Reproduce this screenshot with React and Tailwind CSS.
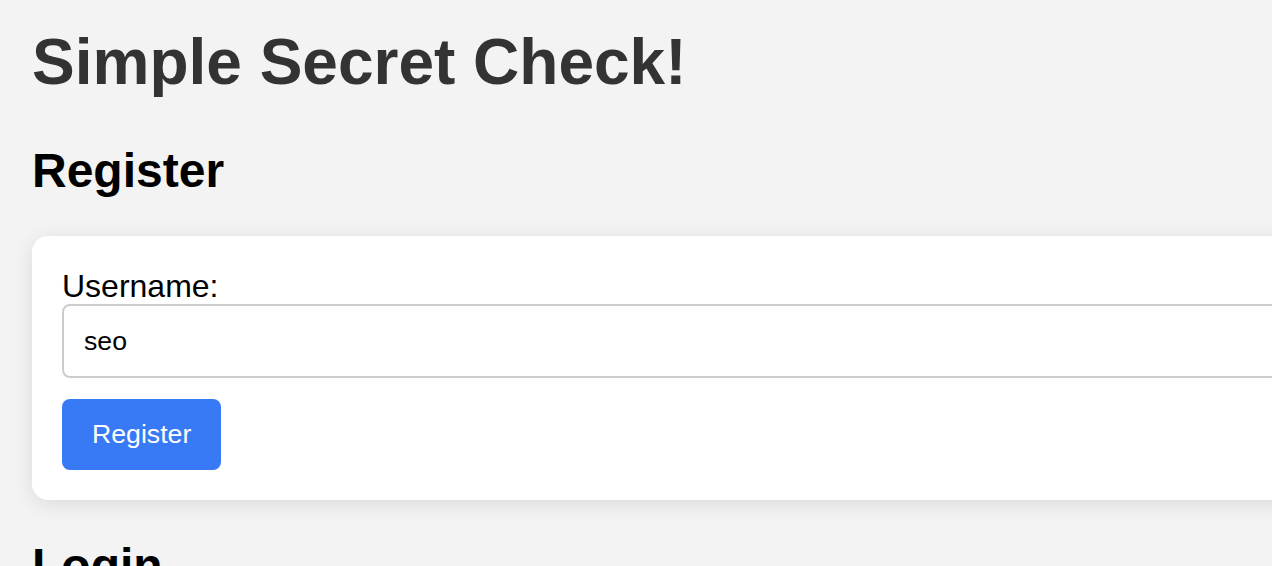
import { useState } from "react";

const App = () => {
  const [username, setUsername] = useState("seo");

  return (
    <div
      className="min-h-screen w-[1272px] overflow-hidden bg-[#f3f3f3] px-8 pt-[25px]"
      style={{ fontFamily: '"Liberation Sans", Arial, sans-serif' }}
    >
      <div className="w-[1400px]">
        <h1 className="text-[64px] leading-[74px] font-bold text-[#333]">
          Simple Secret Check!
        </h1>

        {/* Register */}
        <h2 className="mt-[44px] text-[48px] leading-[55px] font-bold text-black">
          Register
        </h2>
        <div className="mt-[38px] rounded-2xl bg-white px-[30px] pt-[32px] pb-[30px] shadow-[0_4px_20px_rgba(0,0,0,0.1)]">
          <label className="block text-[32px] leading-[36px] text-black">
            Username:
          </label>
          <input
            type="text"
            value={username}
            onChange={(e) => setUsername(e.target.value)}
            className="block w-full rounded-lg border-2 border-[#ccc] bg-white px-5 py-5 text-[26.67px] leading-[30px] text-black outline-none"
          />
          <button className="mt-[21px] rounded-lg bg-[#387af6] px-[30px] py-5 text-[26.67px] leading-[31px] text-white">
            Register
          </button>
        </div>

        {/* Login */}
        <h2 className="mt-[38px] text-[48px] leading-[55px] font-bold text-black">
          Login
        </h2>
      </div>
    </div>
  );
};

export default App;
